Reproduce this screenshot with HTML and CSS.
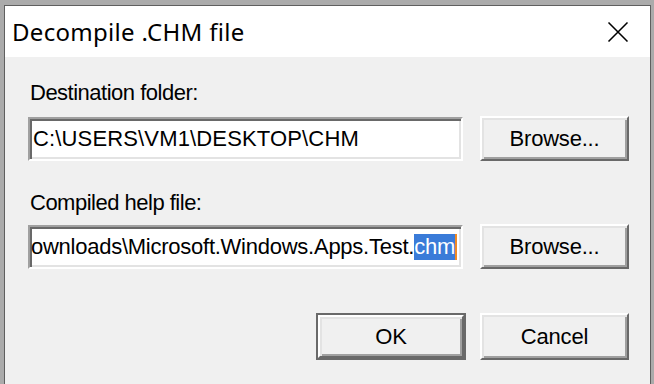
FILE: index.html
```html
<!DOCTYPE html>
<html lang="en">
<head>
  <meta charset="UTF-8" />
  <title>Decompile .CHM file</title>
  <link rel="stylesheet" href="styles.css">
</head>
<body>
  <div class="window">
    <div class="titlebar">
      <span class="title">Decompile .CHM file</span>
      <svg class="close" width="22" height="20" viewBox="0 0 22 20">
        <path d="M1.5 0.5 L20.5 19.5 M20.5 0.5 L1.5 19.5" stroke="#000" stroke-width="1.5" fill="none"/>
      </svg>
    </div>

    <div class="dialog">
      <div class="label first">Destination folder:</div>
      <div class="row">
        <div class="field"><span class="value wide">C:\USERS\VM1\DESKTOP\CHM</span></div>
        <div class="btn">Browse...</div>
      </div>

      <div class="label second">Compiled help file:</div>
      <div class="row">
        <div class="field end"><span class="value tight">ownloads\Microsoft.Windows.Apps.Test.<span class="sel">chm</span><span class="caret"></span></span></div>
        <div class="btn">Browse...</div>
      </div>

      <div class="actions">
        <div class="default"><div class="btn inner">OK</div></div>
        <div class="btn">Cancel</div>
      </div>
    </div>
  </div>
</body>
</html>
```

FILE: styles.css
```css
body {
  margin: 0;
  background: #ababab;
  height: 384px;
  overflow: hidden;
}

.window {
  margin: 5px 0 0 4px;
  width: 645px;
  height: 378px;
  border: 1px solid #5f5f5f;
  border-bottom: none;
  background: #f0f0f0;
}

.titlebar {
  height: 51px;
  background: #fff;
  display: flex;
  align-items: center;
  justify-content: space-between;
  padding: 0 21px 0 7px;
}

.title {
  font-family: "Noto Sans", sans-serif;
  font-size: 24px;
  letter-spacing: 0.3px;
  color: #000;
  margin-top: -1px;
}

.close {
  display: block;
  margin-top: 1px;
}

.dialog {
  padding: 24px 21px 0 23px;
  font-family: "Liberation Sans", Arial, sans-serif;
  font-size: 22px;
  color: #000;
}

.label {
  line-height: 24px;
  padding-left: 2px;
  letter-spacing: -0.5px;
}

.label.first {
  margin-bottom: 11px;
}

.label.second {
  margin-top: 30px;
  margin-bottom: 9px;
}

.row {
  display: flex;
  align-items: center;
  gap: 17px;
}

.field {
  box-sizing: border-box;
  width: 435px;
  height: 44px;
  background: #fff;
  border: 2px solid;
  border-color: #a0a0a0 #fff #fff #a0a0a0;
  box-shadow: inset 2px 2px #696969, inset -2px -2px #e3e3e3;
  display: flex;
  align-items: center;
  padding: 0 4px 0 3px;
  overflow: hidden;
  white-space: nowrap;
}

.field.end {
  justify-content: flex-end;
}

.value {
  line-height: 26px;
  display: flex;
  align-items: center;
}

.value.wide {
  letter-spacing: 0.15px;
}

.value.tight {
  letter-spacing: -0.25px;
}

.sel {
  background: #3a7bd8;
  color: #fff;
}

.caret {
  width: 2px;
  height: 26px;
  background: #f08a24;
}

.btn {
  box-sizing: border-box;
  width: 149px;
  height: 45px;
  background: #f0f0f0;
  border: 2px solid;
  border-color: #fff #696969 #696969 #fff;
  box-shadow: inset 2px 2px #e3e3e3, inset -2px -2px #a0a0a0;
  display: flex;
  align-items: center;
  justify-content: center;
  letter-spacing: -0.2px;
}

.actions {
  display: flex;
  justify-content: flex-end;
  gap: 14px;
  margin-top: 44px;
}

.default {
  border: 2px solid #696969;
}

.btn.inner {
  width: 146px;
  height: 43px;
}

.actions > .btn {
  height: 47px;
}
```
